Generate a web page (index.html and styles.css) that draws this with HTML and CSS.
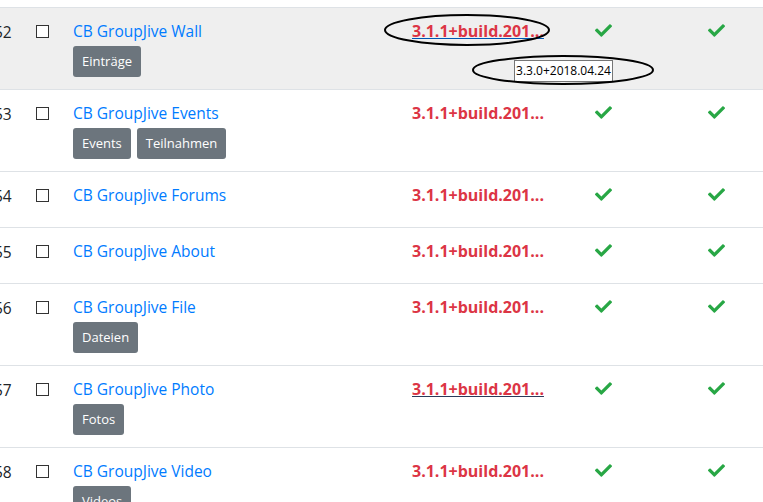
FILE: index.html
```html
<!DOCTYPE html>
<html lang="de">
<head>
  <meta charset="UTF-8" />
  <title>Plugins</title>
  <link rel="stylesheet" href="styles.css">
</head>
<body>
  <div class="page">
    <table class="plugins">
      <colgroup>
        <col class="c-id"><col class="c-check"><col class="c-name"><col class="c-version"><col class="c-state"><col class="c-state">
      </colgroup>
      <tbody>
        <tr class="hover">
          <td>52</td>
          <td><span class="box"></span></td>
          <td>
            <a class="name" href="#">CB GroupJive Wall</a>
            <div class="tags"><span class="tag">Einträge</span></div>
          </td>
          <td><a class="version hovered" href="#">3.1.1+build.201...</a></td>
          <td><svg class="ok" viewBox="0 0 512 512"><path d="M173.9 439.4l-166.4-166.4c-10-10-10-26.2 0-36.2l36.2-36.2c10-10 26.2-10 36.2 0L192 312.7 432.1 72.6c10-10 26.2-10 36.2 0l36.2 36.2c10 10 10 26.2 0 36.2l-294.4 294.4c-10 10-26.2 10-36.2 0z"/></svg></td>
          <td><svg class="ok" viewBox="0 0 512 512"><path d="M173.9 439.4l-166.4-166.4c-10-10-10-26.2 0-36.2l36.2-36.2c10-10 26.2-10 36.2 0L192 312.7 432.1 72.6c10-10 26.2-10 36.2 0l36.2 36.2c10 10 10 26.2 0 36.2l-294.4 294.4c-10 10-26.2 10-36.2 0z"/></svg></td>
        </tr>
        <tr>
          <td>53</td>
          <td><span class="box"></span></td>
          <td>
            <a class="name" href="#">CB GroupJive Events</a>
            <div class="tags"><span class="tag">Events</span><span class="tag">Teilnahmen</span></div>
          </td>
          <td><a class="version" href="#">3.1.1+build.201...</a></td>
          <td><svg class="ok" viewBox="0 0 512 512"><path d="M173.9 439.4l-166.4-166.4c-10-10-10-26.2 0-36.2l36.2-36.2c10-10 26.2-10 36.2 0L192 312.7 432.1 72.6c10-10 26.2-10 36.2 0l36.2 36.2c10 10 10 26.2 0 36.2l-294.4 294.4c-10 10-26.2 10-36.2 0z"/></svg></td>
          <td><svg class="ok" viewBox="0 0 512 512"><path d="M173.9 439.4l-166.4-166.4c-10-10-10-26.2 0-36.2l36.2-36.2c10-10 26.2-10 36.2 0L192 312.7 432.1 72.6c10-10 26.2-10 36.2 0l36.2 36.2c10 10 10 26.2 0 36.2l-294.4 294.4c-10 10-26.2 10-36.2 0z"/></svg></td>
        </tr>
        <tr>
          <td>54</td>
          <td><span class="box"></span></td>
          <td>
            <a class="name" href="#">CB GroupJive Forums</a>
            <div class="tags"></div>
          </td>
          <td><a class="version" href="#">3.1.1+build.201...</a></td>
          <td><svg class="ok" viewBox="0 0 512 512"><path d="M173.9 439.4l-166.4-166.4c-10-10-10-26.2 0-36.2l36.2-36.2c10-10 26.2-10 36.2 0L192 312.7 432.1 72.6c10-10 26.2-10 36.2 0l36.2 36.2c10 10 10 26.2 0 36.2l-294.4 294.4c-10 10-26.2 10-36.2 0z"/></svg></td>
          <td><svg class="ok" viewBox="0 0 512 512"><path d="M173.9 439.4l-166.4-166.4c-10-10-10-26.2 0-36.2l36.2-36.2c10-10 26.2-10 36.2 0L192 312.7 432.1 72.6c10-10 26.2-10 36.2 0l36.2 36.2c10 10 10 26.2 0 36.2l-294.4 294.4c-10 10-26.2 10-36.2 0z"/></svg></td>
        </tr>
        <tr>
          <td>55</td>
          <td><span class="box"></span></td>
          <td>
            <a class="name" href="#">CB GroupJive About</a>
            <div class="tags"></div>
          </td>
          <td><a class="version" href="#">3.1.1+build.201...</a></td>
          <td><svg class="ok" viewBox="0 0 512 512"><path d="M173.9 439.4l-166.4-166.4c-10-10-10-26.2 0-36.2l36.2-36.2c10-10 26.2-10 36.2 0L192 312.7 432.1 72.6c10-10 26.2-10 36.2 0l36.2 36.2c10 10 10 26.2 0 36.2l-294.4 294.4c-10 10-26.2 10-36.2 0z"/></svg></td>
          <td><svg class="ok" viewBox="0 0 512 512"><path d="M173.9 439.4l-166.4-166.4c-10-10-10-26.2 0-36.2l36.2-36.2c10-10 26.2-10 36.2 0L192 312.7 432.1 72.6c10-10 26.2-10 36.2 0l36.2 36.2c10 10 10 26.2 0 36.2l-294.4 294.4c-10 10-26.2 10-36.2 0z"/></svg></td>
        </tr>
        <tr>
          <td>56</td>
          <td><span class="box"></span></td>
          <td>
            <a class="name" href="#">CB GroupJive File</a>
            <div class="tags"><span class="tag">Dateien</span></div>
          </td>
          <td><a class="version" href="#">3.1.1+build.201...</a></td>
          <td><svg class="ok" viewBox="0 0 512 512"><path d="M173.9 439.4l-166.4-166.4c-10-10-10-26.2 0-36.2l36.2-36.2c10-10 26.2-10 36.2 0L192 312.7 432.1 72.6c10-10 26.2-10 36.2 0l36.2 36.2c10 10 10 26.2 0 36.2l-294.4 294.4c-10 10-26.2 10-36.2 0z"/></svg></td>
          <td><svg class="ok" viewBox="0 0 512 512"><path d="M173.9 439.4l-166.4-166.4c-10-10-10-26.2 0-36.2l36.2-36.2c10-10 26.2-10 36.2 0L192 312.7 432.1 72.6c10-10 26.2-10 36.2 0l36.2 36.2c10 10 10 26.2 0 36.2l-294.4 294.4c-10 10-26.2 10-36.2 0z"/></svg></td>
        </tr>
        <tr>
          <td>57</td>
          <td><span class="box"></span></td>
          <td>
            <a class="name" href="#">CB GroupJive Photo</a>
            <div class="tags"><span class="tag">Fotos</span></div>
          </td>
          <td><a class="version visited" href="#">3.1.1+build.201...</a></td>
          <td><svg class="ok" viewBox="0 0 512 512"><path d="M173.9 439.4l-166.4-166.4c-10-10-10-26.2 0-36.2l36.2-36.2c10-10 26.2-10 36.2 0L192 312.7 432.1 72.6c10-10 26.2-10 36.2 0l36.2 36.2c10 10 10 26.2 0 36.2l-294.4 294.4c-10 10-26.2 10-36.2 0z"/></svg></td>
          <td><svg class="ok" viewBox="0 0 512 512"><path d="M173.9 439.4l-166.4-166.4c-10-10-10-26.2 0-36.2l36.2-36.2c10-10 26.2-10 36.2 0L192 312.7 432.1 72.6c10-10 26.2-10 36.2 0l36.2 36.2c10 10 10 26.2 0 36.2l-294.4 294.4c-10 10-26.2 10-36.2 0z"/></svg></td>
        </tr>
        <tr>
          <td>58</td>
          <td><span class="box"></span></td>
          <td>
            <a class="name" href="#">CB GroupJive Video</a>
            <div class="tags"><span class="tag">Videos</span></div>
          </td>
          <td><a class="version" href="#">3.1.1+build.201...</a></td>
          <td><svg class="ok" viewBox="0 0 512 512"><path d="M173.9 439.4l-166.4-166.4c-10-10-10-26.2 0-36.2l36.2-36.2c10-10 26.2-10 36.2 0L192 312.7 432.1 72.6c10-10 26.2-10 36.2 0l36.2 36.2c10 10 10 26.2 0 36.2l-294.4 294.4c-10 10-26.2 10-36.2 0z"/></svg></td>
          <td><svg class="ok" viewBox="0 0 512 512"><path d="M173.9 439.4l-166.4-166.4c-10-10-10-26.2 0-36.2l36.2-36.2c10-10 26.2-10 36.2 0L192 312.7 432.1 72.6c10-10 26.2-10 36.2 0l36.2 36.2c10 10 10 26.2 0 36.2l-294.4 294.4c-10 10-26.2 10-36.2 0z"/></svg></td>
        </tr>
      </tbody>
    </table>

    <!-- native title tooltip -->
    <div class="tooltip">3.3.0+2018.04.24</div>

    <!-- hand drawn marks over the screenshot -->
    <svg class="marks" width="763" height="502" viewBox="0 0 763 502">
      <ellipse cx="467" cy="30" rx="82" ry="15" />
      <ellipse cx="563" cy="70" rx="90" ry="14" />
    </svg>
  </div>
</body>
</html>
```

FILE: styles.css
```css
html, body {
  margin: 0;
  padding: 0;
}

body {
  font-family: "Segoe UI", "Open Sans", "Noto Sans", sans-serif;
  font-size: 15.5px;
  color: #212529;
  background: #fff;
  overflow: hidden;
}

.page {
  position: relative;
  width: 763px;
  height: 502px;
  overflow: hidden;
  padding-top: 7px;
  box-sizing: border-box;
}

.plugins {
  table-layout: fixed;
  border-collapse: collapse;
  margin-left: -18px;
  width: 800px;
}

.c-id { width: 42px; }
.c-check { width: 37px; }
.c-name { width: 339px; }
.c-version { width: 183px; }
.c-state { width: 113px; }

.plugins td {
  padding: 12px;
  border-top: 1px solid #dee2e6;
  vertical-align: top;
  line-height: 24px;
  white-space: nowrap;
}

.plugins tr.hover td {
  background-color: #efefef;
}

.box {
  display: inline-block;
  width: 11px;
  height: 11px;
  border: 1px solid #333;
  background: #fff;
  margin-top: 5px;
  vertical-align: top;
}

.name {
  color: #007bff;
  text-decoration: none;
  position: relative;
  top: -1px;
}

.tags {
  display: flex;
  gap: 6px;
  margin-top: 2px;
  min-height: 5px;
}

.tag {
  display: inline-block;
  background-color: #6c757d;
  color: #fff;
  font-size: 13px;
  line-height: 21px;
  padding: 5px 9px;
  border-radius: 3px;
}

.version {
  color: #dc3545;
  font-weight: bold;
  font-size: 16px;
  text-decoration: none;
  position: relative;
  top: -1px;
}

.version.hovered {
  text-decoration: underline;
  text-decoration-color: #0056b3;
}

.version.visited {
  text-decoration: underline;
  text-decoration-color: #2b3a5a;
}

.ok {
  width: 17px;
  height: 17px;
  fill: #28a745;
  margin-top: 2px;
  vertical-align: top;
}

.tooltip {
  position: absolute;
  left: 514px;
  top: 60px;
  width: 97px;
  height: 20px;
  border: 1px solid #767676;
  background: #fff;
  font-size: 12px;
  line-height: 20px;
  text-align: center;
  color: #000;
}

.marks {
  position: absolute;
  left: 0;
  top: 0;
  pointer-events: none;
}

.marks ellipse {
  fill: none;
  stroke: #000;
  stroke-width: 2;
}
```
